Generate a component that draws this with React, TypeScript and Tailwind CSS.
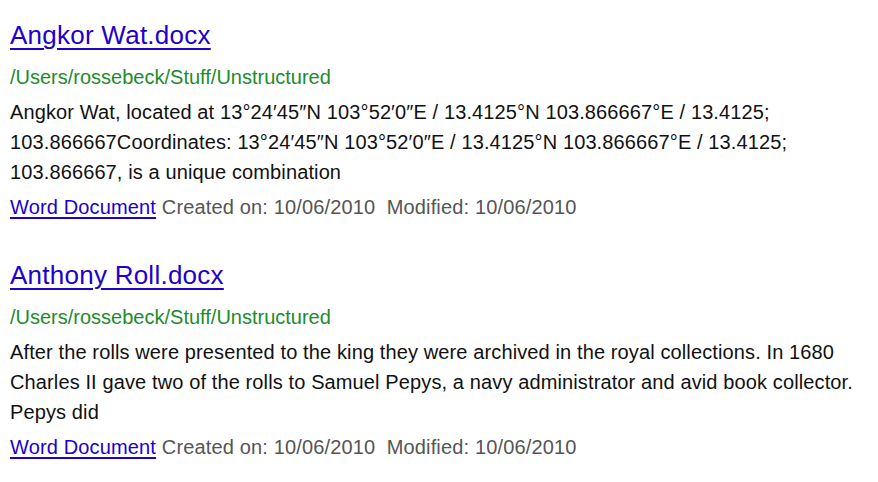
type Result = {
  title: string
  path: string
  snippet: string
  kind: string
  created: string
  modified: string
}

const results: Result[] = [
  {
    title: 'Angkor Wat.docx',
    path: '/Users/rossebeck/Stuff/Unstructured',
    snippet:
      'Angkor Wat, located at 13°24′45″N 103°52′0″E / 13.4125°N 103.866667°E / 13.4125; 103.866667Coordinates: 13°24′45″N 103°52′0″E / 13.4125°N 103.866667°E / 13.4125; 103.866667, is a unique combination',
    kind: 'Word Document',
    created: '10/06/2010',
    modified: '10/06/2010'
  },
  {
    title: 'Anthony Roll.docx',
    path: '/Users/rossebeck/Stuff/Unstructured',
    snippet:
      'After the rolls were presented to the king they were archived in the royal collections. In 1680 Charles II gave two of the rolls to Samuel Pepys, a navy administrator and avid book collector. Pepys did',
    kind: 'Word Document',
    created: '10/06/2010',
    modified: '10/06/2010'
  }
]

function ResultItem({ r }: { r: Result }) {
  return (
    <div className="mb-[38px]">
      <a href="#" className="block w-fit text-[26px] leading-[30px] tracking-[0.25px] text-[#2200cc] underline underline-offset-[4px] decoration-[2px]">
        {r.title}
      </a>
      <div className="mt-[12px] text-[20px] leading-[30px] text-[#1d8c2c]">{r.path}</div>
      <div className="mt-[5px] text-[20px] leading-[30px] tracking-[0.12px] text-[#111]">{r.snippet}</div>
      <div className="mt-[5px] text-[20px] leading-[30px] tracking-[0.15px] text-[#555]">
        <a href="#" className="text-[#2200cc] underline underline-offset-[3px]">{r.kind}</a>
        {' '}Created on: {r.created}&nbsp; Modified: {r.modified}
      </div>
    </div>
  )
}

export default function App() {
  return (
    <div className="min-h-[482px] bg-white px-[10px] pt-[20px] font-['Liberation_Sans',Arial,sans-serif]">
      {results.map(r => (
        <ResultItem key={r.title} r={r} />
      ))}
    </div>
  )
}
